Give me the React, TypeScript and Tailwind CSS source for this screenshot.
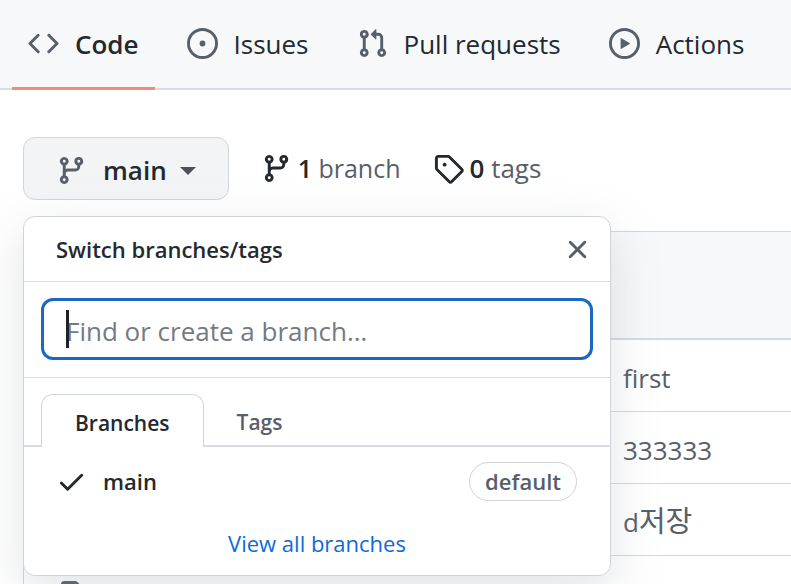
import type { ReactNode } from "react";

const paths = {
  code: "M4.72 3.22a.75.75 0 011.06 1.06L2.06 8l3.72 3.72a.75.75 0 11-1.06 1.06L.47 8.53a.75.75 0 010-1.06l4.25-4.25zm6.56 0a.75.75 0 10-1.06 1.06L13.94 8l-3.72 3.72a.75.75 0 101.06 1.06l4.25-4.25a.75.75 0 000-1.06l-4.25-4.25z",
  issue: "M8 9.5a1.5 1.5 0 100-3 1.5 1.5 0 000 3zM8 0a8 8 0 100 16A8 8 0 008 0zM1.5 8a6.5 6.5 0 1113 0 6.5 6.5 0 01-13 0z",
  pull: "M7.177 3.073L9.573.677A.25.25 0 0110 .854v4.792a.25.25 0 01-.427.177L7.177 3.427a.25.25 0 010-.354zM3.75 2.5a.75.75 0 100 1.5.75.75 0 000-1.5zm-2.25.75a2.25 2.25 0 113 2.122v5.256a2.251 2.251 0 11-1.5 0V5.372A2.25 2.25 0 011.5 3.25zM11 2.5h-1V4h1a1 1 0 011 1v5.628a2.251 2.251 0 101.5 0V5A2.5 2.5 0 0011 2.5zm1 10.25a.75.75 0 111.5 0 .75.75 0 01-1.5 0zM3.75 12a.75.75 0 100 1.5.75.75 0 000-1.5z",
  play: "M1.5 8a6.5 6.5 0 1113 0 6.5 6.5 0 01-13 0zM8 0a8 8 0 100 16A8 8 0 008 0zM6.379 5.227A.25.25 0 006 5.442v5.117a.25.25 0 00.379.214l4.264-2.559a.25.25 0 000-.428L6.379 5.227z",
  branch: "M11.75 2.5a.75.75 0 100 1.5.75.75 0 000-1.5zm-2.25.75a2.25 2.25 0 113 2.122V6A2.5 2.5 0 0110 8.5H6a1 1 0 00-1 1v1.128a2.251 2.251 0 11-1.5 0V5.372a2.25 2.25 0 111.5 0v1.836A2.492 2.492 0 016 7h4a1 1 0 001-1v-.628A2.25 2.25 0 019.5 3.25zM4.25 12a.75.75 0 100 1.5.75.75 0 000-1.5zM3.5 3.25a.75.75 0 111.5 0 .75.75 0 01-1.5 0z",
  tag: "M2.5 7.775V2.75a.25.25 0 01.25-.25h5.025a.25.25 0 01.177.073l6.25 6.25a.25.25 0 010 .354l-5.025 5.025a.25.25 0 01-.354 0l-6.25-6.25a.25.25 0 01-.073-.177zm-1.5 0V2.75C1 1.784 1.784 1 2.75 1h5.025c.464 0 .91.184 1.238.513l6.25 6.25a1.75 1.75 0 010 2.474l-5.026 5.026a1.75 1.75 0 01-2.474 0l-6.25-6.25A1.75 1.75 0 011 7.775zM6 5a1 1 0 100 2 1 1 0 000-2z",
  close: "M3.72 3.72a.75.75 0 011.06 0L8 6.94l3.22-3.22a.75.75 0 111.06 1.06L9.06 8l3.22 3.22a.75.75 0 11-1.06 1.06L8 9.06l-3.22 3.22a.75.75 0 01-1.06-1.06L6.94 8 3.72 4.78a.75.75 0 010-1.06z",
  check: "M13.78 4.22a.75.75 0 010 1.06l-7.25 7.25a.75.75 0 01-1.06 0L2.22 9.28a.75.75 0 011.06-1.06L6 10.94l6.72-6.72a.75.75 0 011.06 0z",
  file: "M3.75 1.5a.25.25 0 00-.25.25v11.5c0 .138.112.25.25.25h8.5a.25.25 0 00.25-.25V6H9.75A1.75 1.75 0 018 4.25V1.5H3.75zm5.75.56v2.19c0 .138.112.25.25.25h2.19L9.5 2.06zM2 1.75C2 .784 2.784 0 3.75 0h5.586c.464 0 .909.184 1.237.513l2.914 2.914c.329.328.513.773.513 1.237v8.586A1.75 1.75 0 0112.25 15h-8.5A1.75 1.75 0 012 13.25V1.75z",
};

function Icon({ name, className = "text-[#57606a]" }: { name: keyof typeof paths; className?: string }) {
  return (
    <svg viewBox="0 0 16 16" aria-hidden="true" className={`size-[31px] shrink-0 fill-current ${className}`}>
      <path fillRule="evenodd" d={paths[name]} />
    </svg>
  );
}

function NavItem({ icon, active, children }: { icon: keyof typeof paths; active?: boolean; children: ReactNode }) {
  return (
    <a
      href="#"
      aria-current={active ? "page" : undefined}
      className={`-mb-0.5 flex h-[90px] items-center gap-4 border-b-3 px-4 whitespace-nowrap ${
        active ? "rounded-b-[1px] border-[#f38a78] font-semibold" : "border-transparent"
      }`}
    >
      <Icon name={icon} />
      <span className="pt-0.5">{children}</span>
    </a>
  );
}

function BranchMenu() {
  return (
    <div
      role="dialog"
      aria-label="Switch branches/tags"
      className="absolute top-full left-0 mt-4 w-[588px] rounded-xl border border-[#d0d4d9] bg-white text-[22px] shadow-[0_16px_48px_rgba(140,149,159,0.25)]"
    >
      <div className="flex h-[65px] items-center justify-between border-b border-[#d8dce1] pr-[17px] pl-8">
        <h2 className="font-semibold">Switch branches/tags</h2>
        <button type="button" aria-label="Close">
          <Icon name="close" />
        </button>
      </div>
      <div className="border-b border-[#d8dce1] px-[17px] pt-4 pb-[17px]">
        <div className="relative">
          <input
            type="text"
            aria-label="Find or create a branch"
            placeholder="Find or create a branch…"
            className="block h-[62px] w-full rounded-xl border-3 border-[#1b68c4] bg-white px-[22px] pt-1 text-[26px] outline-none placeholder:text-[#737a83]"
          />
          <span aria-hidden="true" className="absolute top-3 left-[25px] h-[38px] w-[3px] bg-[#1f2328]" />
        </div>
      </div>
      <div role="tablist" className="flex border-b-2 border-[#d8dce3] px-[17px] pt-4 text-[21px] font-semibold">
        <button
          type="button"
          role="tab"
          aria-selected="true"
          className="-mb-0.5 h-[53px] rounded-t-xl border border-b-0 border-[#d0d7de] bg-white px-[33px] pt-1.5"
        >
          Branches
        </button>
        <button type="button" role="tab" aria-selected="false" className="px-[33px] pt-1.5 text-[#57606a]">
          Tags
        </button>
      </div>
      <a href="#" className="flex h-[68px] items-center pr-[33px] pl-8 font-semibold">
        <Icon name="check" className="text-[#24292f]" />
        <span className="grow pl-4">main</span>
        <span className="flex h-[39px] items-center rounded-full border border-[#d0d4d9] px-[15px] text-[#57606a]">
          default
        </span>
      </a>
      <div className="flex h-[60px] items-center justify-center pb-1 text-[#0f69d8]">
        <a href="#">View all branches</a>
      </div>
    </div>
  );
}

const commits: { id: number; message: ReactNode }[] = [
  { id: 1, message: "first" },
  { id: 2, message: "333333" },
  {
    id: 3,
    message: (
      <>
        d<span lang="ko" className="text-[29px] leading-none">저장</span>
      </>
    ),
  },
];

export default function App() {
  return (
    <div className="h-screen overflow-hidden bg-white font-['Open_Sans','Noto_Sans_CJK_KR',sans-serif] text-[26px] text-[#24292f]">
      <nav aria-label="Repository" className="flex h-[90px] gap-4 border-b-2 border-[#d8dce3] bg-[#f6f8fa] pl-3">
        <NavItem icon="code" active>Code</NavItem>
        <NavItem icon="issue">Issues</NavItem>
        <NavItem icon="pull">Pull requests</NavItem>
        <NavItem icon="play">Actions</NavItem>
      </nav>
      <main className="pt-[47px] pl-[23px]">
        <div className="flex items-center gap-8">
          <div className="relative">
            <button
              type="button"
              aria-haspopup="dialog"
              aria-expanded="true"
              className="flex h-[63px] items-center rounded-xl border border-[#d3d6d9] bg-[#f3f4f6] px-8 pt-1 font-semibold"
            >
              <Icon name="branch" />
              <span className="pr-[13px] pl-4">main</span>
              <svg viewBox="0 0 16 8" aria-hidden="true" className="h-2 w-4 fill-[#4c5259]">
                <path d="M0 0h16L8 8z" />
              </svg>
            </button>
            <BranchMenu />
          </div>
          <a href="#" className="flex items-center gap-1.5 text-[25px] whitespace-nowrap text-[#57606a]">
            <Icon name="branch" className="text-[#24292f]" />
            <span>
              <strong className="font-semibold text-[#24292f]">1</strong> branch
            </span>
          </a>
          <a href="#" className="flex items-center gap-1.5 text-[26px] whitespace-nowrap text-[#57606a]">
            <Icon name="tag" className="text-[#24292f]" />
            <span>
              <strong className="font-semibold text-[#24292f]">0</strong> tags
            </span>
          </a>
        </div>
        <section aria-label="Files" className="mt-[31px] border-t border-l border-[#d0d7de] text-[#57606a]">
          <div className="h-[108px] border-b-2 border-[#d3d9df] bg-[#f6f8fa]" />
          <ul>
            {commits.map(({ id, message }) => (
              <li key={id} className="h-[72px] border-b border-[#d3d7dc] pt-[19px] pl-[599px]">
                {message}
              </li>
            ))}
            <li className="h-[72px] pt-[25px] pl-[33px]">
              <Icon name="file" />
            </li>
          </ul>
        </section>
      </main>
    </div>
  );
}
